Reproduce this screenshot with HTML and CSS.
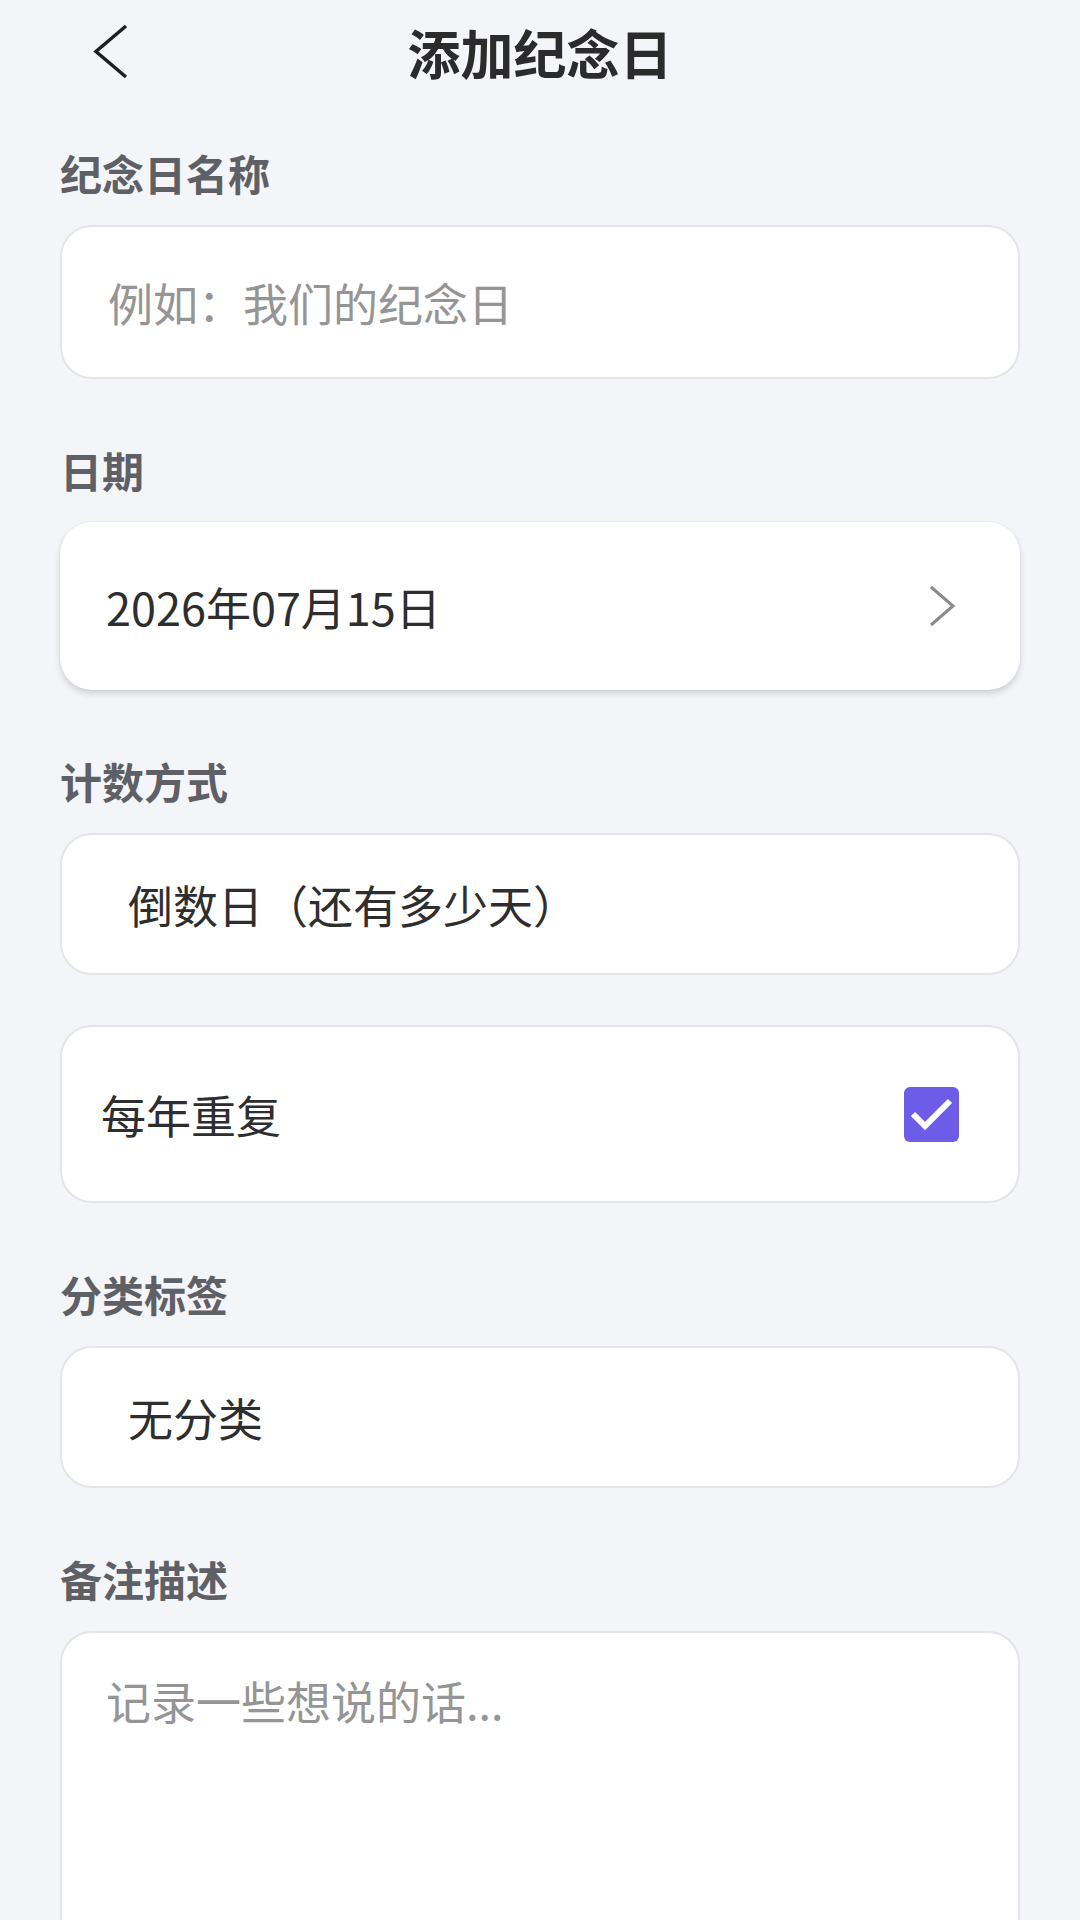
FILE: index.html
```html
<!DOCTYPE html>
<html lang="zh-CN">
<head>
  <meta charset="UTF-8">
  <meta name="viewport" content="width=device-width, initial-scale=1.0">
  <title>添加纪念日</title>
  <link rel="stylesheet" href="styles.css">
</head>
<body>

  <!-- top bar -->
  <header class="top-bar">
    <button class="back-btn" aria-label="返回">
      <svg width="40" height="56" viewBox="0 0 40 56">
        <path d="M36 2 L6 27.5 L36 53" fill="none" stroke="#1f1f1f" stroke-width="3.5" stroke-linejoin="miter"/>
      </svg>
    </button>
    <h1 class="page-title">添加纪念日</h1>
    <span></span>
  </header>

  <main class="form">

    <!-- name -->
    <div class="field">
      <label class="field-label" for="name">纪念日名称</label>
      <input class="text-input" id="name" type="text" placeholder="例如：我们的纪念日">
    </div>

    <!-- date -->
    <div class="field">
      <div class="field-label">日期</div>
      <div class="date-card">
        <span class="date-value">2026年07月15日</span>
        <svg class="arrow-right" width="28" height="44" viewBox="0 0 28 44">
          <path d="M3 3 L25 22 L3 41" fill="none" stroke="#8a8a8a" stroke-width="3"/>
        </svg>
      </div>
    </div>

    <!-- count mode -->
    <div class="field">
      <div class="field-label">计数方式</div>
      <div class="select-box">倒数日（还有多少天）</div>
      <div class="check-card">
        <span class="check-text">每年重复</span>
        <span class="checkbox checked">
          <svg width="55" height="55" viewBox="0 0 55 55">
            <path d="M9 27 L21 39 L46 14" fill="none" stroke="#fff" stroke-width="6"/>
          </svg>
        </span>
      </div>
    </div>

    <!-- category -->
    <div class="field">
      <div class="field-label">分类标签</div>
      <div class="select-box">无分类</div>
    </div>

    <!-- note -->
    <div class="field">
      <label class="field-label" for="note">备注描述</label>
      <textarea class="text-area" id="note" placeholder="记录一些想说的话..."></textarea>
    </div>

  </main>

</body>
</html>
```

FILE: styles.css
```css
body {
  margin: 0;
  background-color: #f4f5f9;
  font-family: "Noto Sans CJK SC", "Noto Sans", sans-serif;
  color: #2e2e2e;
  overflow: hidden;
}

/* top bar */
.top-bar {
  height: 104px;
  display: grid;
  grid-template-columns: 1fr auto 1fr;
  align-items: center;
}

.back-btn {
  justify-self: start;
  margin-left: 90px;
  padding: 0;
  border: none;
  background: none;
  width: 40px;
  height: 56px;
}

.back-btn svg {
  display: block;
}

.page-title {
  margin: 0;
  font-size: 53px;
  line-height: 1;
  font-weight: 700;
  color: #2b2b2b;
}

/* form */
.form {
  padding: 41px 60px 0;
}

.field {
  margin-bottom: 63px;
}

.field-label {
  display: block;
  font-size: 42px;
  line-height: 56px;
  font-weight: 700;
  color: #5f6066;
  margin-bottom: 24px;
}

.text-input,
.text-area {
  display: block;
  box-sizing: border-box;
  width: 100%;
  border: 2px solid #e4e5e9;
  border-radius: 32px;
  background: #fff;
  font-family: inherit;
  font-size: 45px;
  color: #2e2e2e;
  outline: none;
}

.text-input {
  height: 154px;
  padding: 0 46px;
}

.text-area {
  height: 340px;
  padding: 38px 44px;
  line-height: 60px;
  resize: none;
}

.text-input::placeholder,
.text-area::placeholder {
  color: #959595;
}

/* date */
.date-card {
  height: 168px;
  box-sizing: border-box;
  display: flex;
  align-items: center;
  justify-content: space-between;
  padding: 0 64px 0 46px;
  background: #fff;
  border-radius: 32px;
  box-shadow: 0 0 0 1px rgba(0, 0, 0, 0.03), 0 4px 6px rgba(0, 0, 0, 0.14);
  font-size: 45px;
}

.arrow-right {
  display: block;
}

/* select-like rows */
.select-box {
  height: 142px;
  box-sizing: border-box;
  display: flex;
  align-items: center;
  padding: 0 66px;
  background: #fff;
  border: 2px solid #e4e5e9;
  border-radius: 32px;
  font-size: 45px;
}

.check-card {
  margin-top: 50px;
  height: 178px;
  box-sizing: border-box;
  display: flex;
  align-items: center;
  justify-content: space-between;
  padding: 0 59px 0 39px;
  background: #fff;
  border: 2px solid #e4e5e9;
  border-radius: 32px;
  font-size: 45px;
}

.checkbox {
  width: 55px;
  height: 55px;
  border-radius: 6px;
  background: #6c5ce7;
}

.checkbox svg {
  display: block;
}
```
